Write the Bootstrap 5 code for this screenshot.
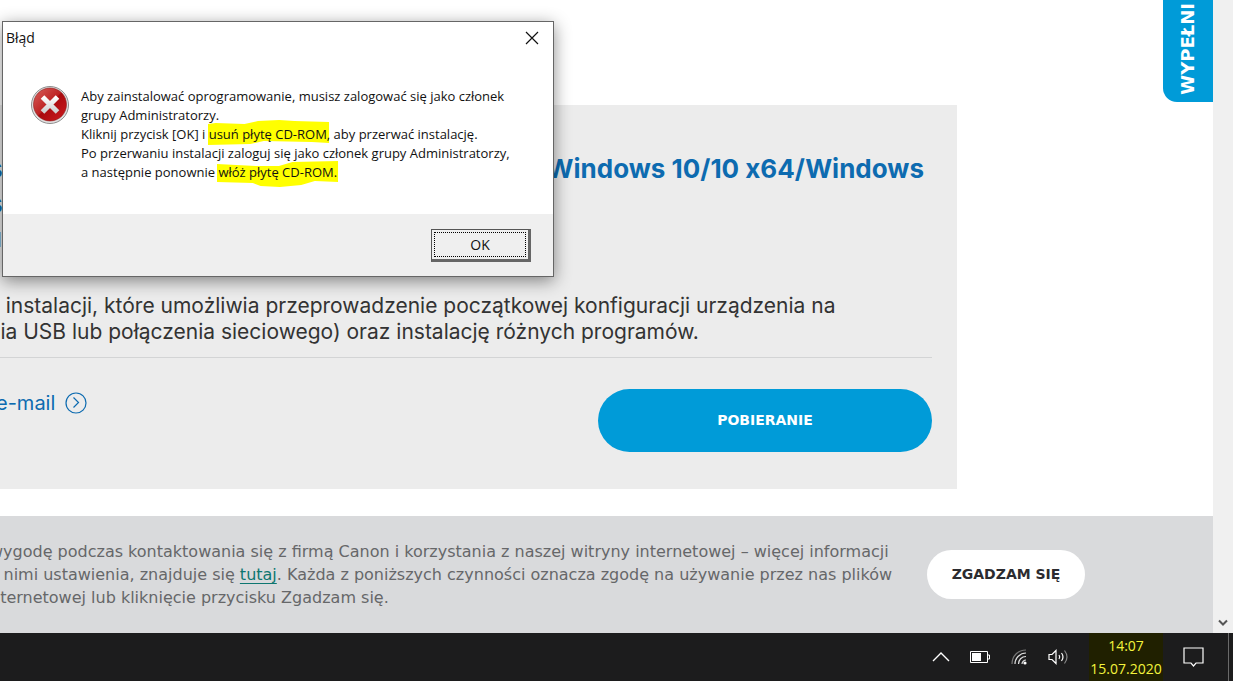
<!DOCTYPE html>
<html lang="pl">
<head>
<meta charset="utf-8">
<meta name="viewport" content="width=device-width, initial-scale=1">
<title>Pobieranie sterownika</title>
<link href="https://cdn.jsdelivr.net/npm/bootstrap@5.3.0/dist/css/bootstrap.min.css" rel="stylesheet">
<style>
body{font-family:Inter,"Open Sans",sans-serif;color:#333;background:#fff}
.download-panel{background:#ececec;margin-top:105px;margin-right:256px;padding:46px 25px 37px 0}
.driver-title{font-size:26px;line-height:35px;font-weight:700;color:#0d6bb0;margin:0;padding-right:8px;font-feature-settings:"calt" 0}
.bleed-left{margin-left:-12px;white-space:nowrap}
.driver-version{font-size:20px;line-height:30px;font-weight:700;color:#40302c;margin-left:-4px;margin-top:4px;margin-bottom:38px}
.driver-text{font-size:21px;line-height:26px;margin-bottom:12px}
.driver-actions{border-top:1px solid #d3d4d5;padding-top:31px}
.mail-link{font-size:20px;line-height:28px;color:#0d6bb0;text-decoration:none;gap:10px;margin-left:-4px}
.btn-download,.btn-agree{font-family:"DejaVu Sans",sans-serif;font-size:14px;font-weight:700;white-space:nowrap}
.btn-download{width:334px;height:63px;background:#009bd8;color:#fff}
.btn-download:hover{background:#0087bd;color:#fff}
.consent-bar{background:#d9dadc;color:#666769;padding:24px 128px 24px 0;min-height:117px}
.consent-text{font-family:"DejaVu Sans",sans-serif;font-size:16px;line-height:23px;margin-left:-10px;white-space:nowrap}
.consent-text a{color:#0d7670;text-underline-offset:3px}
.btn-agree{width:158px;height:49px;background:#fff;color:#2c2c30}
.btn-agree:hover{background:#f2f2f2}
.scroll-rail{width:20px;background:#f0f0f0;padding-bottom:6px}
.survey-tab{top:0;right:0;width:50px;height:102px;background:#009bd8;color:#fff;border-bottom-left-radius:14px;padding-bottom:7px;text-decoration:none;font-family:"DejaVu Sans",sans-serif;font-size:18px;line-height:20px;font-weight:700}
.survey-tab span{writing-mode:vertical-rl;transform:rotate(180deg)}
.error-dialog{left:2px;top:21px;width:552px;background:#fff;border:1px solid #666;box-shadow:0 4px 16px rgba(0,0,0,.45);color:#111;font-family:"Open Sans",sans-serif;font-size:13px;line-height:19px;z-index:5}
.dialog-title{height:31px;padding:0 14px 0 3px;font-size:14px}
.dialog-title button{background:none;border:0;padding:0;width:14px;line-height:0}
.dialog-main{padding:32px 12px 32px 27px;gap:11px}
.dialog-main p{white-space:nowrap;isolation:isolate;padding-top:2px}
.marker{left:-1px;top:-5px;z-index:-1}
.dialog-foot{background:#efefef;height:62px;padding-right:22px}
.btn-ok{width:100px;height:33px;background:#efefef;border:1px solid #555;border-right:3px solid #666;border-bottom:3px solid #666;padding:2px;font-size:14px;color:#111}
.btn-ok span{border:1px dotted #000;height:100%}
.taskbar{background:#1c1c1d;height:48px;font-family:"Open Sans",sans-serif;color:#fff}
.taskbar button{background:none;border:0;padding:0;line-height:0;color:#fff}
.tray{gap:20px}
.taskbar .tray-clock{background:#202000;color:#f4f43c;font-size:14px;line-height:23px;width:74px;height:48px}
.desk-edge{border-left:1px solid #6a6a6a;width:5px;height:48px;margin-left:3px}
</style>
</head>
<body class="d-flex flex-column vh-100 overflow-hidden">
<div class="d-flex flex-grow-1">
  <div class="position-relative d-flex flex-column flex-grow-1 overflow-hidden">
    <main class="download-panel">
      <h2 class="driver-title bleed-left d-flex justify-content-between"><span>s</span><span>Windows 10/10 x64/Windows</span></h2>
      <div class="driver-title bleed-left">s</div>
      <div class="driver-version">l</div>
      <p class="driver-text bleed-left">y instalacji, które umożliwia przeprowadzenie początkowej konfiguracji urządzenia na<br>nia USB lub połączenia sieciowego) oraz instalację różnych programów.</p>
      <div class="driver-actions d-flex justify-content-between align-items-start">
        <a href="#" class="mail-link d-flex align-items-center"><span>e-mail</span>
          <svg width="22" height="22" viewBox="0 0 22 22" fill="none" stroke="currentColor" stroke-width="1.2"><circle cx="11" cy="11" r="10"/><path d="M8.500 5.500l5 5-5 5"/></svg></a>
        <button type="button" class="btn btn-download rounded-pill">POBIERANIE</button>
      </div>
    </main>
    <a href="#" class="survey-tab position-absolute d-flex align-items-end justify-content-center overflow-hidden"><span>WYPEŁNI</span></a>
    <section class="consent-bar mt-auto d-flex justify-content-between align-items-center">
      <p class="consent-text mb-0">wygodę podczas kontaktowania się z firmą Canon i korzystania z naszej witryny internetowej – więcej informacji<br>z nimi ustawienia, znajduje się <a href="#">tutaj</a>. Każda z poniższych czynności oznacza zgodę na używanie przez nas plików<br>nternetowej lub kliknięcie przycisku Zgadzam się.</p>
      <button type="button" class="btn btn-agree rounded-pill">ZGADZAM SIĘ</button>
    </section>
  </div>
  <div class="scroll-rail d-flex align-items-end justify-content-center flex-shrink-0">
    <svg width="10" height="8" viewBox="0 0 10 8" fill="none" stroke="#555" stroke-width="2"><path d="M1 1.500l4 4 4-4"/></svg>
  </div>
</div>

<div class="error-dialog position-absolute" role="dialog" aria-labelledby="dialogTitle">
  <div class="dialog-title d-flex align-items-center justify-content-between">
    <span id="dialogTitle">Błąd</span>
    <button type="button" aria-label="Zamknij"><svg width="14" height="14" viewBox="0 0 14 14" stroke="#111" stroke-width="1.2"><path d="M1 1l12 12M13 1L1 13"/></svg></button>
  </div>
  <div class="dialog-main d-flex align-items-start">
    <svg class="flex-shrink-0" width="40" height="40" viewBox="0 0 40 40">
      <defs><linearGradient id="redBall" x1="0" y1="0" x2="1" y2="1"><stop offset="0" stop-color="#d8605c"/><stop offset=".48" stop-color="#bd2222"/><stop offset=".5" stop-color="#a80a0e"/><stop offset="1" stop-color="#cf1a1e"/></linearGradient>
      <linearGradient id="steel" x1="0" y1="0" x2="0" y2="1"><stop offset="0" stop-color="#fff"/><stop offset="1" stop-color="#cfcfcf"/></linearGradient></defs>
      <circle cx="20" cy="20" r="18.500" fill="#e2e2e2" stroke="#8e8e8e"/><circle cx="20" cy="19.500" r="16.500" fill="url(#redBall)" stroke="#8c1a1a" stroke-width=".6"/>
      <path d="M12.500 12l15 15M27.500 12l-15 15" stroke="url(#steel)" stroke-width="5"/>
    </svg>
    <p class="mb-0">Aby zainstalować oprogramowanie, musisz zalogować się jako członek<br>grupy Administratorzy.<br>Kliknij przycisk [OK] i <span class="position-relative">usuń płytę CD-ROM<svg class="marker position-absolute" width="122" height="26" viewBox="0 0 127 26" preserveAspectRatio="none" fill="#ff0"><path d="M0 4L8 3l30 1 14-3 22-1 16 1 36 1v21l-18-1-50-1-14 3-44 1z"/></svg></span>, aby przerwać instalację.<br>Po przerwaniu instalacji zaloguj się jako członek grupy Administratorzy,<br>a następnie ponownie <span class="position-relative">włóż płytę CD-ROM<svg class="marker position-absolute" width="122" height="30" viewBox="0 0 126 30" preserveAspectRatio="none" fill="#ff0"><path d="M0 6l40 2 24 0 14-4 47-1v21l-24-1-14 4-22 2-20-1-8-3L0 24z"/></svg></span>.</p>
  </div>
  <div class="dialog-foot d-flex align-items-center justify-content-end">
    <button type="button" class="btn-ok"><span class="d-flex align-items-center justify-content-center">OK</span></button>
  </div>
</div>

<footer class="taskbar d-flex align-items-center justify-content-end flex-shrink-0">
  <div class="tray d-flex align-items-center">
    <button type="button" aria-label="Ukryte ikony"><svg width="18" height="12" viewBox="0 0 18 12" fill="none" stroke="currentColor" stroke-width="1.400"><path d="M1 10l8-8 8 8"/></svg></button>
    <button type="button" aria-label="Bateria"><svg width="20" height="12" viewBox="0 0 20 12"><path d="M.5.500h17v11H.5zM18 4h1.500v4H18" fill="none" stroke="#fff"/><path d="M2 2h9v8H2z" fill="#fff"/></svg></button>
    <button type="button" aria-label="Sieć"><svg width="18" height="18" viewBox="0 0 18 18" fill="none" stroke-width="1.200"><path d="M2 16C2 8 8 2 16 2" stroke="#777"/><path d="M5 16C5 10 10 5 16 5M8.500 16c0-4 3-7.500 7.500-7.500M12 16c0-2 2-4 4-4" stroke="#ddd"/><circle cx="15" cy="15" r="1.600" fill="#fff"/></svg></button>
    <button type="button" aria-label="Głośność"><svg width="21" height="18" viewBox="0 0 21 18" fill="none" stroke="#fff" stroke-width="1.200"><path d="M1 6.500h3l4-4v13l-4-4H1zM11 7q1.500 2 0 4M13.500 5q3 4 0 8"/><path d="M16.500 2.500q5 6.500 0 13" stroke="#888"/></svg></button>
    <button type="button" class="tray-clock">14:07<br>15.07.2020</button>
    <button type="button" aria-label="Powiadomienia"><svg width="22" height="22" viewBox="0 0 22 22" fill="none" stroke="#fff" stroke-width="1.200"><path d="M1 2h19v15h-7l-2.500 3L8 17H1z"/></svg></button>
    <span class="desk-edge"></span>
  </div>
</footer>
<script src="https://cdn.jsdelivr.net/npm/bootstrap@5.3.0/dist/js/bootstrap.bundle.min.js"></script>
</body>
</html>
